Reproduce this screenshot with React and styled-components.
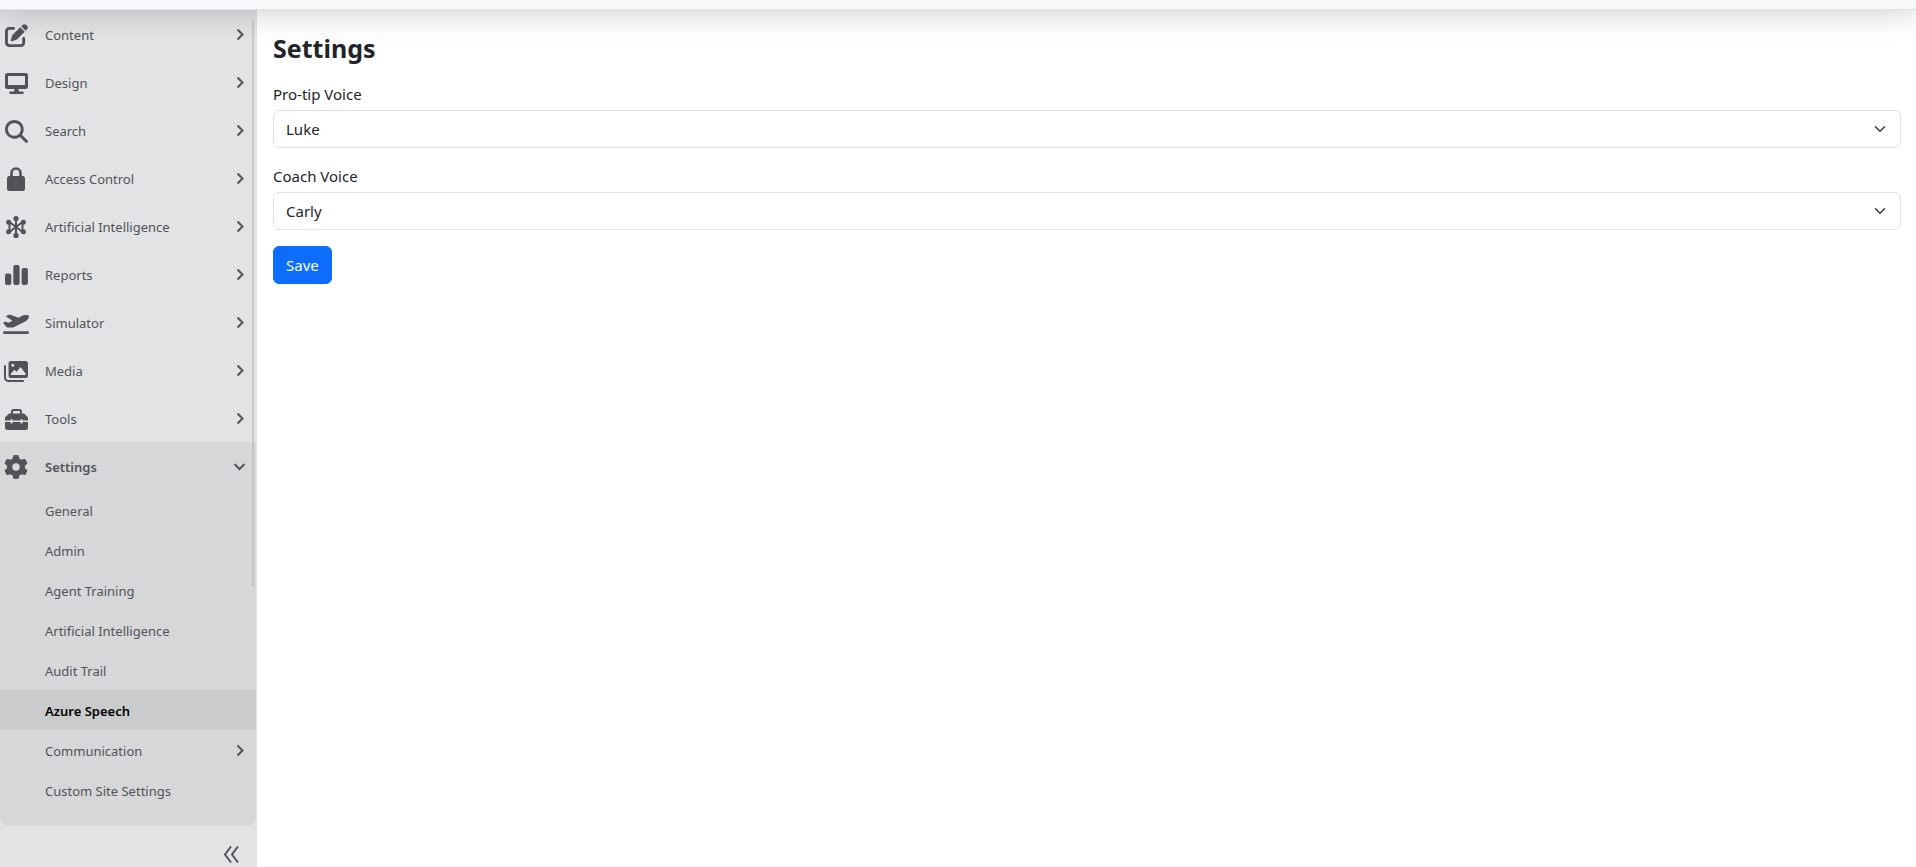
import React, { useState } from 'react';
import styled, { createGlobalStyle, css } from 'styled-components';
import {
  FaPenToSquare,
  FaMagnifyingGlass,
  FaPlaneDeparture,
  FaGear,
} from 'react-icons/fa6';

const GlobalStyle = createGlobalStyle`
  *, *::before, *::after {
    box-sizing: border-box;
  }

  body {
    margin: 0;
    background-color: #fff;
    color: #212529;
    font-family: "Segoe UI", "Noto Sans", "Liberation Sans", sans-serif;
    font-size: 15px;
    line-height: 24px;
  }
`;

const Page = styled.div`
  display: flex;
  flex-direction: column;
  height: 100vh;
  overflow: hidden;
`;

const TopBar = styled.header`
  position: relative;
  z-index: 2;
  flex: none;
  height: 70px;
  margin-top: -60px;
  background-color: #f8f9fa;
  border-bottom: 1px solid #dee2e6;
  box-shadow: 0 6px 28px rgba(0, 0, 0, 0.16);
  pointer-events: none;
`;

const Body = styled.div`
  display: flex;
  flex: 1;
  min-height: 0;
`;

const Sidebar = styled.nav`
  display: flex;
  flex-direction: column;
  flex: none;
  width: 257px;
  background-color: #e2e3e5;
  border-right: 1px solid #dee2e6;
`;

const MenuScroll = styled.div`
  position: relative;
  flex: 1;
  min-height: 0;
  overflow: hidden;
`;

const ScrollThumb = styled.div`
  position: absolute;
  top: 10px;
  right: 2px;
  width: 2px;
  height: 566px;
  background-color: rgba(0, 0, 0, 0.1);
`;

const MenuList = styled.ul`
  margin: 0;
  padding: 0;
  list-style: none;
`;

const MenuGroup = styled.li`
  ${({ $open }) => $open && css`
    padding-bottom: 16px;
    background-color: #d6d7d9;
    border-radius: 0 0 8px 8px;
  `}
`;

const itemStyles = css`
  display: flex;
  align-items: center;
  width: 100%;
  border: 0;
  background: none;
  color: #505458;
  font-family: inherit;
  font-size: 13px;
  line-height: 20px;
  text-align: left;
  text-decoration: none;
  cursor: pointer;
`;

const MenuButton = styled.button`
  ${itemStyles}
  height: 48px;
  padding: 2px 8px 0 3px;
  font-weight: ${({ $open }) => ($open ? 600 : 400)};
`;

const SubLink = styled.a`
  ${itemStyles}
  height: 40px;
  padding: 2px 8px 0 45px;

  ${({ $active }) => $active && css`
    background-color: #cacbcd;
    color: #000;
    font-weight: 600;
  `}
`;

const IconBox = styled.span`
  display: flex;
  align-items: center;
  justify-content: center;
  width: 26px;
  margin-right: 16px;

  svg {
    flex: none;
    width: ${({ $w }) => $w}px;
    height: ${({ $h }) => $h}px;
  }
`;

const ItemLabel = styled.span`
  flex: 1;
`;

const CollapseBar = styled.div`
  display: flex;
  justify-content: flex-end;
  flex: none;
  height: 41px;
  padding: 20px 16px 0 0;
`;

const CollapseButton = styled.button`
  display: flex;
  align-items: flex-start;
  padding: 0;
  border: 0;
  background: none;
  color: #505458;
  cursor: pointer;
`;

const Content = styled.main`
  flex: 1;
  min-width: 0;
  padding: 20px 15px 20px 16px;
`;

const Title = styled.h1`
  margin: 0 0 16px;
  font-size: 25px;
  font-weight: 700;
  line-height: 36px;
`;

const Field = styled.div`
  margin-bottom: 16px;
`;

const FieldLabel = styled.label`
  display: block;
  margin-bottom: 4px;
  line-height: 24px;
`;

const SelectWrap = styled.div`
  display: grid;
  align-items: center;

  > * {
    grid-area: 1 / 1;
  }

  svg {
    justify-self: end;
    margin-right: 13px;
    pointer-events: none;
  }
`;

const Select = styled.select`
  width: 100%;
  height: 38px;
  padding: 0 36px 0 12px;
  border: 1px solid #dee2e6;
  border-radius: 6px;
  background-color: #fff;
  color: #212529;
  font-family: inherit;
  font-size: 15px;
  line-height: 24px;
  appearance: none;
`;

const SaveButton = styled.button`
  height: 38px;
  padding: 0 12px;
  border: 1px solid #0d6efd;
  border-radius: 6px;
  background-color: #0d6efd;
  color: #fff;
  font-family: inherit;
  font-size: 15px;
  line-height: 24px;
  cursor: pointer;
`;

const ChevronRight = () => (
  <svg width="16" height="16" viewBox="0 0 16 16" fill="none" stroke="currentColor" strokeWidth="2">
    <path d="M5.5 2.5l5 5-5 5" />
  </svg>
);

const ChevronDown = () => (
  <svg width="16" height="16" viewBox="0 0 16 16" fill="none" stroke="currentColor" strokeWidth="2">
    <path d="M2.500 5l5 5 5-5" />
  </svg>
);

const SelectArrow = () => (
  <svg width="16" height="12" viewBox="0 0 16 16" fill="none" stroke="#343a40">
    <path strokeLinecap="round" strokeLinejoin="round" strokeWidth="2" d="m2 5 6 6 6-6" />
  </svg>
);

const CollapseIcon = () => (
  <svg width="18" height="18" viewBox="0 0 18 18" fill="none" stroke="currentColor" strokeWidth="2">
    <path d="M9 0.5l-6 8 6 8M16 0.5l-6 8 6 8" />
  </svg>
);

const MonitorIcon = () => (
  <svg viewBox="0 0 23 21" fill="currentColor">
    <path
      fillRule="evenodd"
      d="M2.500 0h18A2.500 2.500 0 0 1 23 2.500v11A2.500 2.500 0 0 1 20.500 16h-18A2.500 2.500 0 0 1 0 13.500v-11A2.500 2.500 0 0 1 2.500 0zM3 3v9h17V3z"
    />
    <path d="M9.500 16h4l.5 2.500h3.500a1.200 1.200 0 0 1 0 2.500h-12a1.200 1.200 0 0 1 0-2.500H9z" />
  </svg>
);

const LockIcon = () => (
  <svg viewBox="0 0 18 24" fill="currentColor">
    <rect y="9" width="18" height="15" rx="2.500" />
    <path d="M4.500 10V6a4.500 4.500 0 0 1 9 0v4" fill="none" stroke="currentColor" strokeWidth="2.600" />
  </svg>
);

const NetworkIcon = () => (
  <svg viewBox="0 0 20 22" fill="currentColor">
    <path d="M10 2v18M3.500 6v10l13-10v10L3.500 6" fill="none" stroke="currentColor" strokeWidth="2" />
    <circle cx="10" cy="2.600" r="2.600" />
    <circle cx="10" cy="19.400" r="2.600" />
    <circle cx="2.600" cy="6.300" r="2.500" />
    <circle cx="2.600" cy="15.700" r="2.500" />
    <circle cx="17.400" cy="6.300" r="2.500" />
    <circle cx="17.400" cy="15.700" r="2.500" />
  </svg>
);

const BarsIcon = () => (
  <svg viewBox="0 0 23 20" fill="currentColor">
    <rect x="0" y="8.500" width="6.300" height="11.500" rx="2" />
    <rect x="8.300" y="0" width="6.300" height="20" rx="2" />
    <rect x="16.600" y="3" width="6.300" height="17" rx="2" />
  </svg>
);

const ImagesIcon = () => (
  <svg viewBox="0 0 24 21" fill="currentColor">
    <path d="M1 5v11.500A3.500 3.500 0 0 0 4.500 20H19" fill="none" stroke="currentColor" strokeWidth="2" strokeLinecap="round" />
    <path
      fillRule="evenodd"
      d="M7 0h14.500A2.500 2.500 0 0 1 24 2.500v12a2.500 2.500 0 0 1-2.500 2.500H7a2.500 2.500 0 0 1-2.500-2.500v-12A2.500 2.500 0 0 1 7 0zM8.800 2.800a1.500 1.500 0 1 0 0 3 1.500 1.500 0 0 0 0-3zM7 14h14.500v-1.500L16.500 6l-4 5-2-2.200L7 12.500z"
    />
  </svg>
);

const ToolboxIcon = () => (
  <svg viewBox="0 0 23 21" fill="currentColor">
    <path d="M7 5V2.500A1.500 1.500 0 0 1 8.500 1h6A1.500 1.500 0 0 1 16 2.500V5" fill="none" stroke="currentColor" strokeWidth="2" />
    <path d="M4 4.500h15l4 4v3h-5.500v-1.300h-2v1.300h-8v-1.300h-2v1.300H0v-3z" />
    <path d="M0 13h5.500v1.500h2V13h8v1.500h2V13H23v5.500a2.500 2.500 0 0 1-2.500 2.500h-18A2.500 2.500 0 0 1 0 18.500z" />
  </svg>
);

const menu = [
  { label: 'Content', icon: <FaPenToSquare />, w: 23, h: 23 },
  { label: 'Design', icon: <MonitorIcon />, w: 23, h: 21 },
  { label: 'Search', icon: <FaMagnifyingGlass />, w: 23, h: 23 },
  { label: 'Access Control', icon: <LockIcon />, w: 18, h: 24 },
  { label: 'Artificial Intelligence', icon: <NetworkIcon />, w: 20, h: 22 },
  { label: 'Reports', icon: <BarsIcon />, w: 23, h: 20 },
  { label: 'Simulator', icon: <FaPlaneDeparture />, w: 26, h: 21 },
  { label: 'Media', icon: <ImagesIcon />, w: 24, h: 21 },
  { label: 'Tools', icon: <ToolboxIcon />, w: 23, h: 21 },
];

const settingsMenu = [
  { label: 'General' },
  { label: 'Admin' },
  { label: 'Agent Training' },
  { label: 'Artificial Intelligence' },
  { label: 'Audit Trail' },
  { label: 'Azure Speech', active: true },
  { label: 'Communication', nested: true },
  { label: 'Custom Site Settings' },
];

const VoiceField = ({ id, label, options, value, onChange }) => (
  <Field>
    <FieldLabel htmlFor={id}>{label}</FieldLabel>
    <SelectWrap>
      <Select id={id} value={value} onChange={(e) => onChange(e.target.value)}>
        {options.map((name) => (
          <option key={name} value={name}>{name}</option>
        ))}
      </Select>
      <SelectArrow />
    </SelectWrap>
  </Field>
);

const App = () => {
  const [proTipVoice, setProTipVoice] = useState('Luke');
  const [coachVoice, setCoachVoice] = useState('Carly');
  const voices = ['Luke', 'Carly'];

  return (
    <Page>
      <GlobalStyle />
      <TopBar />
      <Body>
        <Sidebar>
          <MenuScroll>
            <MenuList>
              {menu.map(({ label, icon, w, h }) => (
                <MenuGroup key={label}>
                  <MenuButton type="button">
                    <IconBox $w={w} $h={h}>{icon}</IconBox>
                    <ItemLabel>{label}</ItemLabel>
                    <ChevronRight />
                  </MenuButton>
                </MenuGroup>
              ))}
              <MenuGroup $open>
                <MenuButton type="button" $open aria-expanded="true">
                  <IconBox $w={24} $h={24}><FaGear /></IconBox>
                  <ItemLabel>Settings</ItemLabel>
                  <ChevronDown />
                </MenuButton>
                <MenuList>
                  {settingsMenu.map(({ label, active, nested }) => (
                    <li key={label}>
                      <SubLink href="#" $active={active}>
                        <ItemLabel>{label}</ItemLabel>
                        {nested && <ChevronRight />}
                      </SubLink>
                    </li>
                  ))}
                </MenuList>
              </MenuGroup>
            </MenuList>
            <ScrollThumb />
          </MenuScroll>
          <CollapseBar>
            <CollapseButton type="button" aria-label="Collapse menu">
              <CollapseIcon />
            </CollapseButton>
          </CollapseBar>
        </Sidebar>
        <Content>
          <Title>Settings</Title>
          <form onSubmit={(e) => e.preventDefault()}>
            <VoiceField
              id="pro-tip-voice"
              label="Pro-tip Voice"
              options={voices}
              value={proTipVoice}
              onChange={setProTipVoice}
            />
            <VoiceField
              id="coach-voice"
              label="Coach Voice"
              options={voices}
              value={coachVoice}
              onChange={setCoachVoice}
            />
            <SaveButton type="submit">Save</SaveButton>
          </form>
        </Content>
      </Body>
    </Page>
  );
};

export default App;
